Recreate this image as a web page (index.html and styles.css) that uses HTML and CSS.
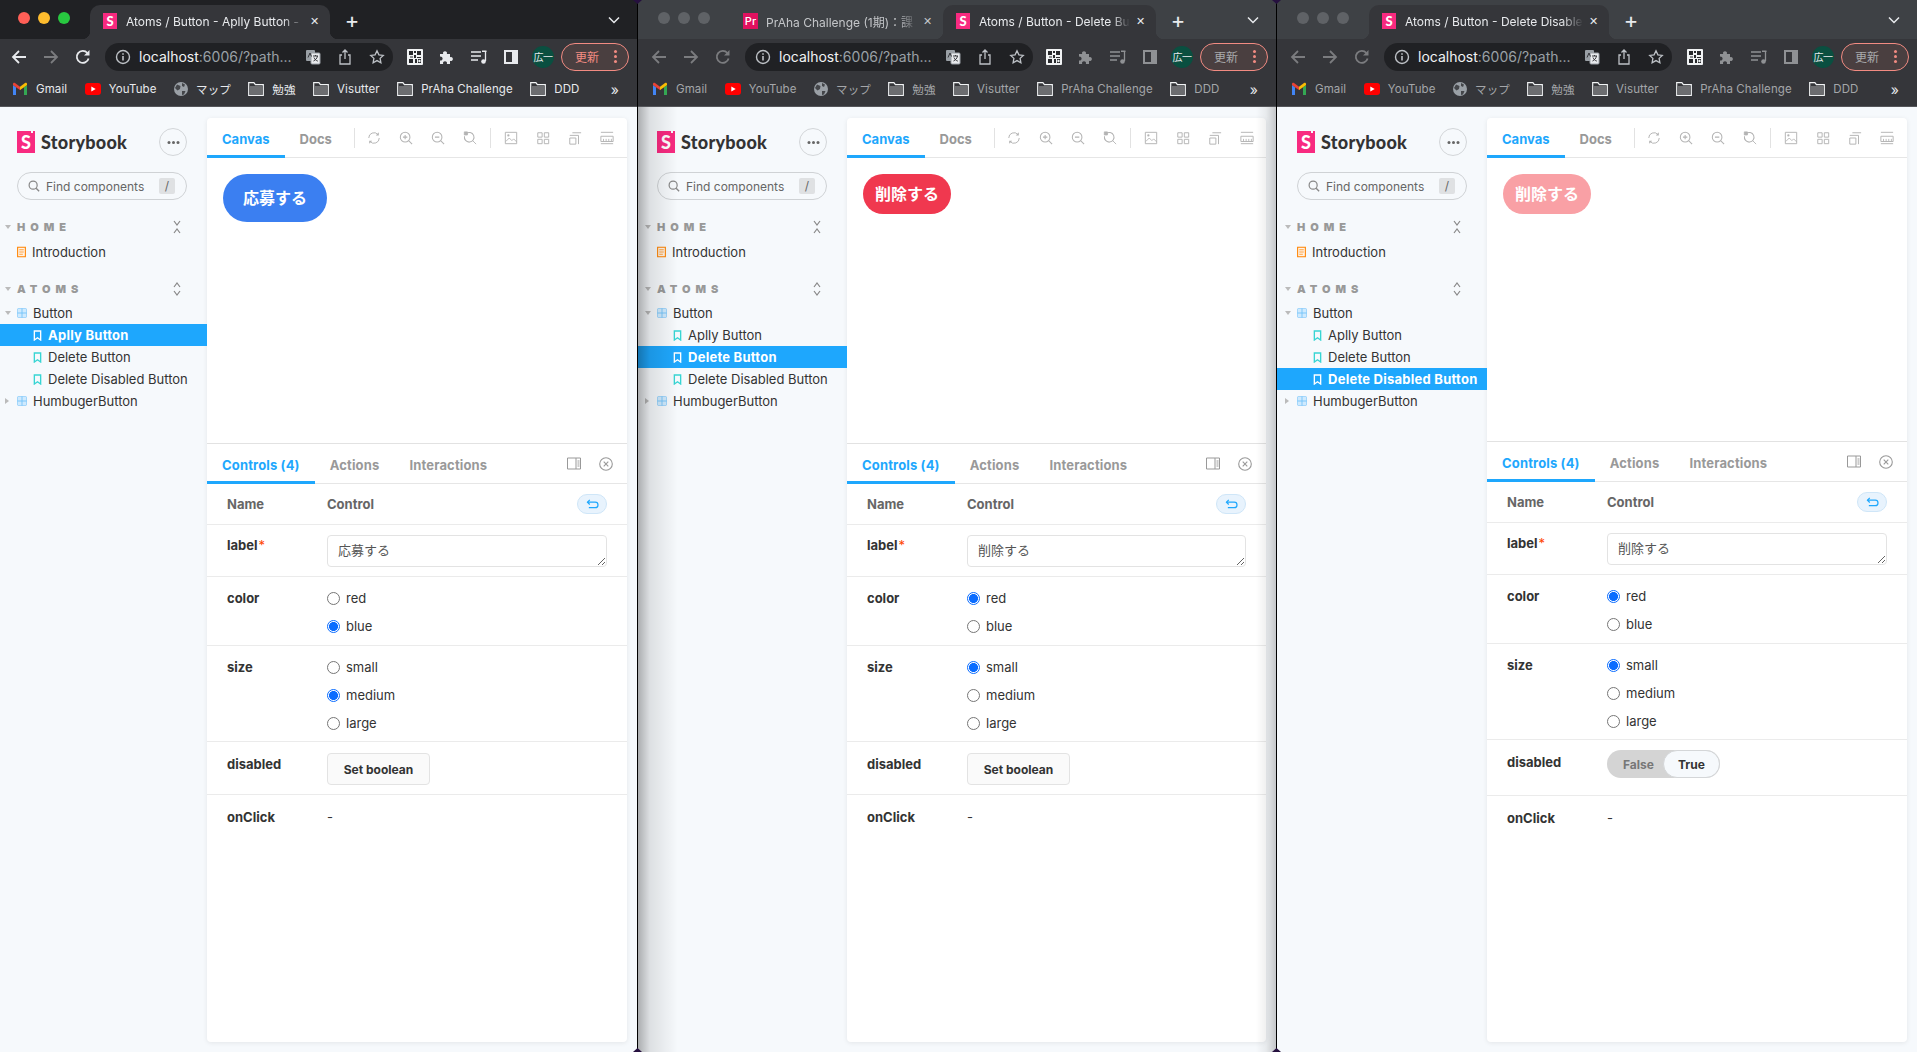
FILE: index.html
```html
<!DOCTYPE html>
<html lang="ja">
<head>
<meta charset="utf-8">
<title>Storybook – Atoms / Button</title>
<link rel="stylesheet" href="styles.css">
</head>
<body>

<!-- icon sprite -->
<svg class="sprite" width="0" height="0" aria-hidden="true">
  <symbol id="i-back" viewBox="0 0 16 16"><path d="M15 8H2M8 2 2 8l6 6" fill="none" stroke="currentColor" stroke-width="1.8"/></symbol>
  <symbol id="i-fwd" viewBox="0 0 16 16"><path d="M1 8h13M8 2l6 6-6 6" fill="none" stroke="currentColor" stroke-width="1.8"/></symbol>
  <symbol id="i-reload" viewBox="0 0 16 16"><path d="M13.6 9.5A6 6 0 1 1 12.4 4" fill="none" stroke="currentColor" stroke-width="1.8"/><path d="M14.5 1v5.5H9z" fill="currentColor"/></symbol>
  <symbol id="i-info" viewBox="0 0 16 16"><circle cx="8" cy="8" r="6.5" fill="none" stroke="currentColor" stroke-width="1.4"/><path d="M7.2 7h1.6v4.6H7.2zM7.2 4.2h1.6v1.6H7.2z" fill="currentColor"/></symbol>
  <symbol id="i-translate" viewBox="0 0 16 16"><rect x="1" y="1" width="9" height="11" rx="1" fill="#9aa0a6"/><rect x="6" y="4" width="9" height="11" rx="1" fill="#e8eaed" stroke="#9aa0a6"/><path d="M8 7h5M10.5 6v1M12.5 7c-.5 2.5-2 4-4 5M9 8.5c.8 2 2 3 3.8 3.6" fill="none" stroke="#35363a"/><path d="M3 8.5 5 4l1.5 3.5" fill="none" stroke="#35363a"/></symbol>
  <symbol id="i-share" viewBox="0 0 16 16"><path d="M5 6H3v9h10V6h-2M8 10V1M5.5 3.5 8 1l2.5 2.5" fill="none" stroke="currentColor" stroke-width="1.3"/></symbol>
  <symbol id="i-star" viewBox="0 0 16 16"><path d="m8 1.8 1.9 4 4.4.6-3.2 3 .8 4.4L8 11.6l-3.9 2.2.8-4.4-3.2-3 4.4-.6z" fill="none" stroke="currentColor" stroke-width="1.3"/></symbol>
  <symbol id="i-qr" viewBox="0 0 16 16"><rect width="16" height="16" rx="1" fill="#f1f3f4"/><path d="M2 2h4v4H2zM10 2h4v4h-4zM2 10h4v4H2zM7 2h2v2H7zM7 6h2v3H7zM3 7.500h3v1H3zM10 8h4v1h-4zM8 10h2v4H8zM11 10h3v4h-3z" fill="#28292c"/><circle cx="12.500" cy="12" r="1.200" fill="#f1f3f4"/></symbol>
  <symbol id="i-puzzle" viewBox="0 0 16 16"><path d="M1 5h3.200a2 2 0 1 1 3.600 0H11v3.200a2 2 0 1 1 0 3.600V15H7.800a2 2 0 1 0-3.600 0H1v-3.500a2 2 0 1 0 0-3.800z" fill="currentColor"/></symbol>
  <symbol id="i-queue" viewBox="0 0 16 16"><path d="M0 3h10M0 7h10M0 11h7M14.500 2v10" fill="none" stroke="currentColor" stroke-width="1.300"/><path d="M11 1.500h4.500V3H11z" fill="currentColor"/><circle cx="12.500" cy="12.500" r="2.300" fill="currentColor"/></symbol>
  <symbol id="i-side" viewBox="0 0 16 16"><path d="M1 1h14v14H1z" fill="currentColor"/><path d="M3 3h6v10H3z" fill="#35363a"/></symbol>
  <symbol id="i-gmail" viewBox="0 0 16 14"><path d="M1 13V3l3 2.300V13z" fill="#4285f4"/><path d="M15 13V3l-3 2.300V13z" fill="#34a853"/><path d="M4 5.300 1 3V1.800C1 .8 2.200.3 3 .9l5 3.800 1.500 2L8 8z" fill="#ea4335"/><path d="M12 5.300 8 8V4.700L13 .9c.8-.6 2-.1 2 .9V3z" fill="#fbbc04"/></symbol>
  <symbol id="i-yt" viewBox="0 0 16 12"><rect width="16" height="12" rx="3" fill="#f00"/><path d="m6.300 3.500 4.400 2.500-4.400 2.500z" fill="#fff"/></symbol>
  <symbol id="i-globe" viewBox="0 0 14 14"><circle cx="7" cy="7" r="7" fill="#9aa0a6"/><path d="M3 2.500 6.500 4 6 7 3.500 8.500 1 6zM8 1l3 1.500-1 2.500L8 4zM8 9h3.500L10 12.500l-2 .5z" fill="#44464a"/></symbol>
  <symbol id="i-folder" viewBox="0 0 16 14"><path d="M.700.7h5.200l1.500 2h7.900v10.600H.700z" fill="none" stroke="#f1f3f4" stroke-width="1.200"/><path d="M1.300 4h13.400v8.700H1.300z" fill="#6c6d70"/></symbol>
  <symbol id="i-search" viewBox="0 0 14 14"><circle cx="6" cy="6" r="4.700" fill="none" stroke="currentColor" stroke-width="1.400"/><path d="m9.500 9.500 3.500 3.500" stroke="currentColor" stroke-width="1.600"/></symbol>
  <symbol id="i-collapse" viewBox="0 0 10 14"><path d="m2 1 3 4 3-4M2 13l3-4 3 4" fill="none" stroke="currentColor" stroke-width="1.200"/></symbol>
  <symbol id="i-expand" viewBox="0 0 10 14"><path d="m2 5 3-4 3 4M2 9l3 4 3-4" fill="none" stroke="currentColor" stroke-width="1.200"/></symbol>
  <symbol id="i-doc" viewBox="0 0 10 12"><path d="M.7.7h8.600v10.600H.7z" fill="#fff3e6" stroke="currentColor" stroke-width="1.200"/><path d="M2.500 3.500h5M2.500 6h5M2.500 8.500h4" stroke="currentColor" stroke-width=".8"/></symbol>
  <symbol id="i-comp" viewBox="0 0 12 12"><rect x=".5" y=".5" width="11" height="11" rx="1.500" fill="#cfeafe" stroke="currentColor" stroke-opacity=".7"/><path d="M6 .5v11M.5 6h11" stroke="currentColor"/></symbol>
  <symbol id="i-mark" viewBox="0 0 10 12"><path d="M1.500 1h7v10L5 8.500 1.500 11z" fill="none" stroke="currentColor" stroke-width="1.500"/></symbol>
  <symbol id="i-sync" viewBox="0 0 16 16"><path d="M2 8a6 6 0 0 1 10.500-4M14 8a6 6 0 0 1-10.500 4" fill="none" stroke="currentColor" stroke-width="1.100"/><path d="M13.500 1.500v3.500H10zM2.500 14.500V11H6z" fill="currentColor"/></symbol>
  <symbol id="i-zoomin" viewBox="0 0 16 16"><circle cx="7" cy="7" r="5.500" fill="none" stroke="currentColor" stroke-width="1.200"/><path d="M7 4.500v5M4.500 7h5M11 11l4 4" stroke="currentColor" stroke-width="1.200"/></symbol>
  <symbol id="i-zoomout" viewBox="0 0 16 16"><circle cx="7" cy="7" r="5.500" fill="none" stroke="currentColor" stroke-width="1.200"/><path d="M4.500 7h5M11 11l4 4" stroke="currentColor" stroke-width="1.200"/></symbol>
  <symbol id="i-zoomreset" viewBox="0 0 16 16"><path d="M3.500 3A5.500 5.500 0 1 1 1.700 6" fill="none" stroke="currentColor" stroke-width="1.200"/><path d="M1.500 1h3.500v3.500H1.500zM11 11l4 4" fill="currentColor" stroke="currentColor" stroke-width="1"/></symbol>
  <symbol id="i-photo" viewBox="0 0 16 16"><path d="M1.500 1.500h13v13h-13z" fill="none" stroke="currentColor" stroke-width="1.100"/><path d="m2 12 4-4 3 3 2-2 3.500 3.500" fill="none" stroke="currentColor"/><circle cx="5" cy="5" r="1.300" fill="currentColor"/></symbol>
  <symbol id="i-grid" viewBox="0 0 16 16"><path d="M2 2h5v5H2zM9.500 2h5v5h-5zM2 9.500h5v5H2zM9.500 9.500h5v5h-5z" fill="none" stroke="currentColor" stroke-width="1.100"/></symbol>
  <symbol id="i-outline" viewBox="0 0 16 16"><path d="M2 5h10v10M5 2h10M2 8h7v7H2z" fill="none" stroke="currentColor" stroke-width="1.100"/></symbol>
  <symbol id="i-ruler" viewBox="0 0 16 16"><path d="M1 1.500h14M1 14.500h14" stroke="currentColor" stroke-width="1.100"/><path d="M1 6h14v6H1z" fill="none" stroke="currentColor" stroke-width="1.100"/><path d="M4 9v3M7 9v3M10 9v3M13 9v3" stroke="currentColor"/></symbol>
  <symbol id="i-panel" viewBox="0 0 14 12"><path d="M.5.5h13v11H.5z" fill="none" stroke="currentColor"/><path d="M9 .5v11" stroke="currentColor"/><path d="M10.500 2.500h2v7h-2z" fill="currentColor" opacity=".5"/></symbol>
  <symbol id="i-close" viewBox="0 0 14 14"><circle cx="7" cy="7" r="6.300" fill="none" stroke="currentColor" stroke-width="1.100"/><path d="m4.700 4.700 4.600 4.600m0-4.600-4.600 4.600" stroke="currentColor" stroke-width="1.100"/></symbol>
  <symbol id="i-undo" viewBox="0 0 14 12"><path d="M1.500 3.500h8.500a3 3 0 0 1 0 6H3" fill="none" stroke="currentColor" stroke-width="1.300"/><path d="M4 1 1.500 3.500 4 6" fill="none" stroke="currentColor" stroke-width="1.300"/></symbol>
</svg>

<!-- 1) APPLY BUTTON ---------------------------------------------------------->
<div class="window window-front">
  <div class="tabstrip">
    <div class="lights"><i class="light red"></i><i class="light yellow"></i><i class="light green"></i></div>
    <div class="tab tab-active tab-wide"><span class="favicon">S</span><span class="tab-title">Atoms / Button - Aplly Button -</span><span class="tab-x">✕</span></div>
    <span class="newtab">+</span>
    <svg class="strip-more" viewBox="0 0 12 8"><path d="m1 1.500 5 5 5-5" fill="none" stroke="currentColor" stroke-width="1.500"/></svg>
  </div>
  <div class="toolbar">
    <svg class="ti ti-nav"><use href="#i-back"/></svg>
    <svg class="ti ti-nav ti-off"><use href="#i-fwd"/></svg>
    <svg class="ti ti-nav"><use href="#i-reload"/></svg>
    <div class="urlbar">
      <svg class="ti ti-dim"><use href="#i-info"/></svg>
      <span class="url"><b>localhost</b>:6006/?path...</span>
      <svg class="ti url-right"><use href="#i-translate"/></svg>
      <svg class="ti ti-dim"><use href="#i-share"/></svg>
      <svg class="ti ti-dim"><use href="#i-star"/></svg>
    </div>
    <div class="actions">
      <svg class="ti"><use href="#i-qr"/></svg>
      <svg class="ti ti-fade"><use href="#i-puzzle"/></svg>
      <svg class="ti ti-fade"><use href="#i-queue"/></svg>
      <svg class="ti ti-fade"><use href="#i-side"/></svg>
      <span class="avatar">広一</span>
      <span class="update"><span class="update-text">更新</span><i class="dots"></i></span>
    </div>
  </div>
  <div class="bookmarks">
    <span class="mark"><svg class="bi"><use href="#i-gmail"/></svg>Gmail</span>
    <span class="mark"><svg class="bi"><use href="#i-yt"/></svg>YouTube</span>
    <span class="mark"><svg class="bi bi-globe"><use href="#i-globe"/></svg>マップ</span>
    <span class="mark"><svg class="bi"><use href="#i-folder"/></svg>勉強</span>
    <span class="mark"><svg class="bi"><use href="#i-folder"/></svg>Visutter</span>
    <span class="mark"><svg class="bi"><use href="#i-folder"/></svg>PrAha Challenge</span>
    <span class="mark"><svg class="bi"><use href="#i-folder"/></svg>DDD</span>
    <span class="mark-more">»</span>
  </div>
  <div class="app">
    <aside class="sidebar">
      <div class="brand"><span class="logo">S</span><span class="brand-name">Storybook</span><span class="brand-menu"><i></i></span></div>
      <div class="search"><svg class="search-icon"><use href="#i-search"/></svg><span class="search-text">Find components</span><kbd class="search-key">/</kbd></div>
      <div class="group"><span class="caret caret-down"></span><span class="group-name">HOME</span><svg class="group-toggle"><use href="#i-collapse"/></svg></div>
      <div class="item"><svg class="ico ico-doc"><use href="#i-doc"/></svg>Introduction</div>
      <div class="group group-next"><span class="caret caret-down"></span><span class="group-name">ATOMS</span><svg class="group-toggle"><use href="#i-expand"/></svg></div>
      <div class="item"><span class="caret caret-down caret-item"></span><svg class="ico ico-comp"><use href="#i-comp"/></svg>Button</div>
      <div class="item item-sub item-on"><svg class="ico ico-mark"><use href="#i-mark"/></svg>Aplly Button</div>
      <div class="item item-sub"><svg class="ico ico-mark"><use href="#i-mark"/></svg>Delete Button</div>
      <div class="item item-sub"><svg class="ico ico-mark"><use href="#i-mark"/></svg>Delete Disabled Button</div>
      <div class="item"><span class="caret caret-right caret-item"></span><svg class="ico ico-comp"><use href="#i-comp"/></svg>HumbugerButton</div>
    </aside>
    <main class="main">
      <div class="panel">
        <section class="canvas">
          <div class="tabs">
            <span class="tabs-item tabs-on">Canvas</span><span class="tabs-item">Docs</span>
            <i class="tool-sep"></i>
            <svg class="tool tool-first"><use href="#i-sync"/></svg><svg class="tool"><use href="#i-zoomin"/></svg><svg class="tool"><use href="#i-zoomout"/></svg><svg class="tool"><use href="#i-zoomreset"/></svg>
            <i class="tool-sep tool-sep2"></i>
            <svg class="tool tool-first2"><use href="#i-photo"/></svg><svg class="tool"><use href="#i-grid"/></svg><svg class="tool"><use href="#i-outline"/></svg><svg class="tool"><use href="#i-ruler"/></svg>
          </div>
          <div class="stage"><button class="demo demo-blue">応募する</button></div>
        </section>
        <section class="addons">
          <div class="tabs">
            <span class="tabs-item tabs-on">Controls (4)</span><span class="tabs-item">Actions</span><span class="tabs-item">Interactions</span>
            <svg class="addon-icon addon-icon-first"><use href="#i-panel"/></svg><svg class="addon-icon"><use href="#i-close"/></svg>
          </div>
          <div class="row row-head"><span class="name">Name</span><span class="ctl">Control</span><span class="reset"><svg><use href="#i-undo"/></svg></span></div>
          <div class="row row-label"><span class="name">label<em>*</em></span><div class="ctl"><textarea class="field">応募する</textarea></div></div>
          <div class="row row-radio row-color"><span class="name">color</span><div class="ctl">
            <label class="radio"><input type="radio" name="color1">red</label>
            <label class="radio"><input type="radio" name="color1" checked>blue</label></div></div>
          <div class="row row-radio"><span class="name">size</span><div class="ctl">
            <label class="radio"><input type="radio" name="size1">small</label>
            <label class="radio"><input type="radio" name="size1" checked>medium</label>
            <label class="radio"><input type="radio" name="size1">large</label></div></div>
          <div class="row row-bool"><span class="name">disabled</span><div class="ctl"><button class="setbool">Set boolean</button></div></div>
          <div class="row row-last"><span class="name">onClick</span><span class="ctl ctl-text">-</span></div>
        </section>
      </div>
    </main>
  </div>
</div>

<!-- 2) DELETE BUTTON ---------------------------------------------------------->
<div class="window window-back window-mid">
  <div class="tabstrip">
    <div class="lights"><i class="light"></i><i class="light"></i><i class="light"></i></div>
    <div class="tab tab-idle"><span class="favicon favicon-pr">Pr</span><span class="tab-title">PrAha Challenge (1期)：課</span><span class="tab-x">✕</span></div>
    <div class="tab tab-active"><span class="favicon">S</span><span class="tab-title">Atoms / Button - Delete Bu</span><span class="tab-x">✕</span></div>
    <span class="newtab">+</span>
    <svg class="strip-more" viewBox="0 0 12 8"><path d="m1 1.500 5 5 5-5" fill="none" stroke="currentColor" stroke-width="1.500"/></svg>
  </div>
  <div class="toolbar">
    <svg class="ti ti-nav ti-off"><use href="#i-back"/></svg>
    <svg class="ti ti-nav ti-off"><use href="#i-fwd"/></svg>
    <svg class="ti ti-nav ti-off"><use href="#i-reload"/></svg>
    <div class="urlbar">
      <svg class="ti ti-dim"><use href="#i-info"/></svg>
      <span class="url"><b>localhost</b>:6006/?path...</span>
      <svg class="ti url-right"><use href="#i-translate"/></svg>
      <svg class="ti ti-dim"><use href="#i-share"/></svg>
      <svg class="ti ti-dim"><use href="#i-star"/></svg>
    </div>
    <div class="actions">
      <svg class="ti"><use href="#i-qr"/></svg>
      <svg class="ti ti-fade"><use href="#i-puzzle"/></svg>
      <svg class="ti ti-fade"><use href="#i-queue"/></svg>
      <svg class="ti ti-fade"><use href="#i-side"/></svg>
      <span class="avatar">広一</span>
      <span class="update"><span class="update-text">更新</span><i class="dots"></i></span>
    </div>
  </div>
  <div class="bookmarks">
    <span class="mark"><svg class="bi"><use href="#i-gmail"/></svg>Gmail</span>
    <span class="mark"><svg class="bi"><use href="#i-yt"/></svg>YouTube</span>
    <span class="mark"><svg class="bi bi-globe"><use href="#i-globe"/></svg>マップ</span>
    <span class="mark"><svg class="bi"><use href="#i-folder"/></svg>勉強</span>
    <span class="mark"><svg class="bi"><use href="#i-folder"/></svg>Visutter</span>
    <span class="mark"><svg class="bi"><use href="#i-folder"/></svg>PrAha Challenge</span>
    <span class="mark"><svg class="bi"><use href="#i-folder"/></svg>DDD</span>
    <span class="mark-more">»</span>
  </div>
  <div class="app">
    <aside class="sidebar">
      <div class="brand"><span class="logo">S</span><span class="brand-name">Storybook</span><span class="brand-menu"><i></i></span></div>
      <div class="search"><svg class="search-icon"><use href="#i-search"/></svg><span class="search-text">Find components</span><kbd class="search-key">/</kbd></div>
      <div class="group"><span class="caret caret-down"></span><span class="group-name">HOME</span><svg class="group-toggle"><use href="#i-collapse"/></svg></div>
      <div class="item"><svg class="ico ico-doc"><use href="#i-doc"/></svg>Introduction</div>
      <div class="group group-next"><span class="caret caret-down"></span><span class="group-name">ATOMS</span><svg class="group-toggle"><use href="#i-expand"/></svg></div>
      <div class="item"><span class="caret caret-down caret-item"></span><svg class="ico ico-comp"><use href="#i-comp"/></svg>Button</div>
      <div class="item item-sub"><svg class="ico ico-mark"><use href="#i-mark"/></svg>Aplly Button</div>
      <div class="item item-sub item-on"><svg class="ico ico-mark"><use href="#i-mark"/></svg>Delete Button</div>
      <div class="item item-sub"><svg class="ico ico-mark"><use href="#i-mark"/></svg>Delete Disabled Button</div>
      <div class="item"><span class="caret caret-right caret-item"></span><svg class="ico ico-comp"><use href="#i-comp"/></svg>HumbugerButton</div>
    </aside>
    <main class="main">
      <div class="panel">
        <section class="canvas">
          <div class="tabs">
            <span class="tabs-item tabs-on">Canvas</span><span class="tabs-item">Docs</span>
            <i class="tool-sep"></i>
            <svg class="tool tool-first"><use href="#i-sync"/></svg><svg class="tool"><use href="#i-zoomin"/></svg><svg class="tool"><use href="#i-zoomout"/></svg><svg class="tool"><use href="#i-zoomreset"/></svg>
            <i class="tool-sep tool-sep2"></i>
            <svg class="tool tool-first2"><use href="#i-photo"/></svg><svg class="tool"><use href="#i-grid"/></svg><svg class="tool"><use href="#i-outline"/></svg><svg class="tool"><use href="#i-ruler"/></svg>
          </div>
          <div class="stage"><button class="demo demo-red">削除する</button></div>
        </section>
        <section class="addons">
          <div class="tabs">
            <span class="tabs-item tabs-on">Controls (4)</span><span class="tabs-item">Actions</span><span class="tabs-item">Interactions</span>
            <svg class="addon-icon addon-icon-first"><use href="#i-panel"/></svg><svg class="addon-icon"><use href="#i-close"/></svg>
          </div>
          <div class="row row-head"><span class="name">Name</span><span class="ctl">Control</span><span class="reset"><svg><use href="#i-undo"/></svg></span></div>
          <div class="row row-label"><span class="name">label<em>*</em></span><div class="ctl"><textarea class="field">削除する</textarea></div></div>
          <div class="row row-radio row-color"><span class="name">color</span><div class="ctl">
            <label class="radio"><input type="radio" name="color2" checked>red</label>
            <label class="radio"><input type="radio" name="color2">blue</label></div></div>
          <div class="row row-radio"><span class="name">size</span><div class="ctl">
            <label class="radio"><input type="radio" name="size2" checked>small</label>
            <label class="radio"><input type="radio" name="size2">medium</label>
            <label class="radio"><input type="radio" name="size2">large</label></div></div>
          <div class="row row-bool"><span class="name">disabled</span><div class="ctl"><button class="setbool">Set boolean</button></div></div>
          <div class="row row-last"><span class="name">onClick</span><span class="ctl ctl-text">-</span></div>
        </section>
      </div>
    </main>
  </div>
</div>

<!-- 3) DELETE DISABLED BUTTON ------------------------------------------------->
<div class="window window-back window-last">
  <div class="tabstrip">
    <div class="lights"><i class="light"></i><i class="light"></i><i class="light"></i></div>
    <div class="tab tab-active tab-wide"><span class="favicon">S</span><span class="tab-title">Atoms / Button - Delete Disable</span><span class="tab-x">✕</span></div>
    <span class="newtab">+</span>
    <svg class="strip-more" viewBox="0 0 12 8"><path d="m1 1.500 5 5 5-5" fill="none" stroke="currentColor" stroke-width="1.500"/></svg>
  </div>
  <div class="toolbar">
    <svg class="ti ti-nav ti-off"><use href="#i-back"/></svg>
    <svg class="ti ti-nav ti-off"><use href="#i-fwd"/></svg>
    <svg class="ti ti-nav ti-off"><use href="#i-reload"/></svg>
    <div class="urlbar">
      <svg class="ti ti-dim"><use href="#i-info"/></svg>
      <span class="url"><b>localhost</b>:6006/?path...</span>
      <svg class="ti url-right"><use href="#i-translate"/></svg>
      <svg class="ti ti-dim"><use href="#i-share"/></svg>
      <svg class="ti ti-dim"><use href="#i-star"/></svg>
    </div>
    <div class="actions">
      <svg class="ti"><use href="#i-qr"/></svg>
      <svg class="ti ti-fade"><use href="#i-puzzle"/></svg>
      <svg class="ti ti-fade"><use href="#i-queue"/></svg>
      <svg class="ti ti-fade"><use href="#i-side"/></svg>
      <span class="avatar">広一</span>
      <span class="update"><span class="update-text">更新</span><i class="dots"></i></span>
    </div>
  </div>
  <div class="bookmarks">
    <span class="mark"><svg class="bi"><use href="#i-gmail"/></svg>Gmail</span>
    <span class="mark"><svg class="bi"><use href="#i-yt"/></svg>YouTube</span>
    <span class="mark"><svg class="bi bi-globe"><use href="#i-globe"/></svg>マップ</span>
    <span class="mark"><svg class="bi"><use href="#i-folder"/></svg>勉強</span>
    <span class="mark"><svg class="bi"><use href="#i-folder"/></svg>Visutter</span>
    <span class="mark"><svg class="bi"><use href="#i-folder"/></svg>PrAha Challenge</span>
    <span class="mark"><svg class="bi"><use href="#i-folder"/></svg>DDD</span>
    <span class="mark-more">»</span>
  </div>
  <div class="app">
    <aside class="sidebar">
      <div class="brand"><span class="logo">S</span><span class="brand-name">Storybook</span><span class="brand-menu"><i></i></span></div>
      <div class="search"><svg class="search-icon"><use href="#i-search"/></svg><span class="search-text">Find components</span><kbd class="search-key">/</kbd></div>
      <div class="group"><span class="caret caret-down"></span><span class="group-name">HOME</span><svg class="group-toggle"><use href="#i-collapse"/></svg></div>
      <div class="item"><svg class="ico ico-doc"><use href="#i-doc"/></svg>Introduction</div>
      <div class="group group-next"><span class="caret caret-down"></span><span class="group-name">ATOMS</span><svg class="group-toggle"><use href="#i-expand"/></svg></div>
      <div class="item"><span class="caret caret-down caret-item"></span><svg class="ico ico-comp"><use href="#i-comp"/></svg>Button</div>
      <div class="item item-sub"><svg class="ico ico-mark"><use href="#i-mark"/></svg>Aplly Button</div>
      <div class="item item-sub"><svg class="ico ico-mark"><use href="#i-mark"/></svg>Delete Button</div>
      <div class="item item-sub item-on"><svg class="ico ico-mark"><use href="#i-mark"/></svg>Delete Disabled Button</div>
      <div class="item"><span class="caret caret-right caret-item"></span><svg class="ico ico-comp"><use href="#i-comp"/></svg>HumbugerButton</div>
    </aside>
    <main class="main">
      <div class="panel">
        <section class="canvas">
          <div class="tabs">
            <span class="tabs-item tabs-on">Canvas</span><span class="tabs-item">Docs</span>
            <i class="tool-sep"></i>
            <svg class="tool tool-first"><use href="#i-sync"/></svg><svg class="tool"><use href="#i-zoomin"/></svg><svg class="tool"><use href="#i-zoomout"/></svg><svg class="tool"><use href="#i-zoomreset"/></svg>
            <i class="tool-sep tool-sep2"></i>
            <svg class="tool tool-first2"><use href="#i-photo"/></svg><svg class="tool"><use href="#i-grid"/></svg><svg class="tool"><use href="#i-outline"/></svg><svg class="tool"><use href="#i-ruler"/></svg>
          </div>
          <div class="stage"><button class="demo demo-red demo-off">削除する</button></div>
        </section>
        <section class="addons">
          <div class="tabs">
            <span class="tabs-item tabs-on">Controls (4)</span><span class="tabs-item">Actions</span><span class="tabs-item">Interactions</span>
            <svg class="addon-icon addon-icon-first"><use href="#i-panel"/></svg><svg class="addon-icon"><use href="#i-close"/></svg>
          </div>
          <div class="row row-head"><span class="name">Name</span><span class="ctl">Control</span><span class="reset"><svg><use href="#i-undo"/></svg></span></div>
          <div class="row row-label"><span class="name">label<em>*</em></span><div class="ctl"><textarea class="field">削除する</textarea></div></div>
          <div class="row row-radio row-color"><span class="name">color</span><div class="ctl">
            <label class="radio"><input type="radio" name="color3" checked>red</label>
            <label class="radio"><input type="radio" name="color3">blue</label></div></div>
          <div class="row row-radio"><span class="name">size</span><div class="ctl">
            <label class="radio"><input type="radio" name="size3" checked>small</label>
            <label class="radio"><input type="radio" name="size3">medium</label>
            <label class="radio"><input type="radio" name="size3">large</label></div></div>
          <div class="row row-bool row-toggle"><span class="name">disabled</span><div class="ctl"><span class="toggle"><span class="toggle-off">False</span><span class="toggle-on">True</span></span></div></div>
          <div class="row row-last"><span class="name">onClick</span><span class="ctl ctl-text">-</span></div>
        </section>
      </div>
    </main>
  </div>
</div>

</body>
</html>
```

FILE: styles.css
```css
/* --------- page --------- */
*{box-sizing:border-box;margin:0;padding:0}
html,body{height:100%}
body{
  display:flex;
  overflow:hidden;
  background:#000;
  font-family:Inter,"Noto Sans CJK JP",sans-serif;
  font-size:13px;
  color:#333;
}
.sprite{position:absolute}
svg{display:block}

/* --------- windows --------- */
.window{
  --bar-inset:0px;
  --side-inset:0px;
  --canvas-h:325px;
  --strip:#202124;
  --mark:#e8eaed;
  --fade:#e8eaed;
  position:relative;
  display:flex;
  flex-direction:column;
  height:100%;
}
.window-front{width:638px;border-right:1px solid #000}
.window-back{--bar-inset:2px;--strip:#3e4145;--mark:#a4a6a9;--fade:#8f9194}
.window-mid{--side-inset:2px;width:639px;border-right:1px solid #000}
.window-last{--side-inset:3px;--canvas-h:323px;width:640px}

/* wallpaper showing through the rounded window corners */
.window-front::before,.window-front::after,.window-mid::before,.window-mid::after{
  content:"";
  position:absolute;
  right:-5px;
  width:9px;
  height:4px;
  z-index:3;
  background:#26103f;
}
.window-front::before,.window-mid::before{top:0;clip-path:polygon(0 0,100% 0,50% 100%)}
.window-front::after,.window-mid::after{bottom:0;clip-path:polygon(50% 0,100% 100%,0 100%)}

/* window 2 sits under the shadow of its neighbours */
.window-mid .app::after{
  content:"";
  position:absolute;
  inset:0;
  pointer-events:none;
  background:
    linear-gradient(90deg,rgba(0,0,0,.3),rgba(0,0,0,.1) 12px,rgba(0,0,0,0) 40px),
    linear-gradient(270deg,rgba(0,0,0,.2),rgba(0,0,0,.06) 10px,rgba(0,0,0,0) 20px);
}

/* --------- tab strip --------- */
.tabstrip{
  display:flex;
  align-items:flex-end;
  height:39px;
  flex:none;
  padding-left:calc(18px + var(--bar-inset));
  background:var(--strip);
  color:#e8eaed;
}
.lights{display:flex;gap:8px;align-self:flex-start;margin-top:12px;margin-right:20px}
.light{width:12px;height:12px;border-radius:50%;background:#5f6266}
.red{background:#ff5f57}
.yellow{background:#febc2e}
.green{background:#28c840}
.tab{
  position:relative;
  display:flex;
  align-items:center;
  width:213px;
  height:34px;
  padding:0 9px 2px 13px;
  font-size:12px;
  border-radius:10px 10px 0 0;
}
.tab-wide{width:240px}
.tab-active{background:#35363a}
.tab-active::before,.tab-active::after{
  content:"";
  position:absolute;
  bottom:0;
  width:8px;
  height:8px;
}
.tab-active::before{left:-8px;background:radial-gradient(circle at 0 0,transparent 8px,#35363a 8.5px)}
.tab-active::after{right:-8px;background:radial-gradient(circle at 100% 0,transparent 8px,#35363a 8.5px)}
.tab-idle{color:#c4c6c9}
.favicon{
  flex:none;
  width:14px;
  height:16px;
  margin-right:9px;
  background:#f82a80;
  color:#fff;
  font:900 13px/16px Lato,sans-serif;
  text-align:center;
}
.favicon-pr{background:#e0115f;font:500 11px/16px Inter,sans-serif;width:15px;margin-right:8px}
.tab-title{
  flex:1;
  min-width:0;
  overflow:hidden;
  white-space:nowrap;
  -webkit-mask-image:linear-gradient(90deg,#000 88%,transparent);
  mask-image:linear-gradient(90deg,#000 88%,transparent);
}
.tab-x{flex:none;width:14px;margin-left:3px;font-size:11px;text-align:center}
.newtab{align-self:center;margin-left:14px;width:16px;font-size:22px;line-height:22px;text-align:center;font-weight:400}
.strip-more{align-self:center;width:12px;height:8px;margin-left:auto;margin-right:17px}

/* --------- toolbar --------- */
.toolbar{
  display:flex;
  align-items:center;
  flex:none;
  height:37px;
  padding:0 8px 2px calc(9px + var(--bar-inset));
  background:#35363a;
  color:#e8eaed;
}
.ti{flex:none;width:16px;height:16px}
.ti-nav{width:20px;height:16px;margin-right:12px}
.ti-off{color:#7b7c7f}
.ti-dim{color:#bdc1c6}
.urlbar{
  display:flex;
  align-items:center;
  gap:16px;
  flex:none;
  width:288px;
  height:28px;
  padding:0 12px 0 10px;
  border-radius:14px;
  background:#202124;
}
.url{flex:none;width:150px;margin-left:-8px;font-size:14px;color:#9aa0a6;white-space:nowrap}
.url b{font-weight:400;color:#f1f3f4}
.url-right{margin-left:auto}
.actions{display:flex;align-items:center;gap:16px;margin-left:auto}
.ti-fade{color:var(--fade)}
.avatar{
  width:22px;
  height:22px;
  margin-left:-3px;
  margin-right:-9px;
  border-radius:50%;
  background:#0a4f40;
  color:#e8eaed;
  font-size:10px;
  line-height:22px;
  text-align:center;
  white-space:nowrap;
  letter-spacing:-.5px;
}
.update{
  display:flex;
  align-items:center;
  width:68px;
  height:28px;
  padding-left:13px;
  border:1px solid #f28b82;
  border-radius:14px;
  background:#4a3f40;
  color:#f28b82;
  font-size:12px;
}
.window-back .update-text{color:#a8a9ab}
.dots{
  width:3px;
  height:3px;
  margin-left:15px;
  border-radius:50%;
  background:#f28b82;
  box-shadow:0 -5px 0 #f28b82,0 5px 0 #f28b82;
}

/* --------- bookmarks --------- */
.bookmarks{
  display:flex;
  align-items:center;
  gap:17.5px;
  flex:none;
  height:31px;
  padding:0 18px 4px calc(12px + var(--bar-inset));
  background:#35363a;
  border-bottom:1px solid #55565a;
  color:var(--mark);
  font-size:11.5px;
  letter-spacing:.1px;
}
.mark{display:flex;align-items:center;gap:8px;white-space:nowrap}
.bi{width:16px;height:14px}
.bi-globe{width:14px}
.mark-more{margin-left:auto;font-size:14px;color:#e8eaed}

/* --------- storybook layout --------- */
.app{position:relative;flex:1;display:flex;min-height:0;background:#f6f9fc}
.sidebar{flex:none;width:calc(207px + var(--side-inset));padding-top:21px}
.main{flex:1;min-width:0;padding:11px 10px 10px 0}
.panel{
  display:flex;
  flex-direction:column;
  height:100%;
  border-radius:4px;
  background:#fff;
  box-shadow:0 1px 5px rgba(0,0,0,.08);
  overflow:hidden;
}

/* --------- sidebar --------- */
.brand{
  display:flex;
  align-items:center;
  height:28px;
  padding-left:calc(17px + var(--side-inset));
}
.logo{
  position:relative;
  width:18px;
  height:22px;
  background:#f82a80;
  color:#fff;
  font:900 18px/22px Lato,sans-serif;
  text-align:center;
}
.logo::after{content:"";position:absolute;top:0;right:2px;width:2px;height:2px;background:#f6f9fc}
.brand-name{margin-left:6px;font:900 18px/28px Lato,sans-serif;color:#333;letter-spacing:.25px}
.brand-menu{
  display:flex;
  align-items:center;
  justify-content:center;
  width:28px;
  height:28px;
  margin-left:32px;
  border:1px solid #d3d6d9;
  border-radius:50%;
}
.brand-menu i{
  width:3px;
  height:3px;
  border-radius:50%;
  background:#666;
  box-shadow:-4.5px 0 0 #666,4.5px 0 0 #666;
}
.search{
  display:flex;
  align-items:center;
  width:170px;
  height:28px;
  margin:16px 0 16px calc(17px + var(--side-inset));
  padding:0 11px 0 10px;
  border:1px solid #cfd2d5;
  border-radius:14px;
  color:#666;
}
.search-icon{width:12px;height:12px;color:#888}
.search-text{margin-left:6px;white-space:nowrap;font-size:12px}
.search-key{
  width:16px;
  height:16px;
  margin-left:auto;
  background:#dfe1e3;
  border-radius:2px;
  font:12px/16px Inter,sans-serif;
  color:#666;
  text-align:center;
}
.group{
  position:relative;
  display:flex;
  align-items:center;
  height:22px;
  margin-bottom:3px;
  padding-left:calc(17px + var(--side-inset));
}
.group-next{margin-top:15px;margin-bottom:2px}
.group-name{font-size:11px;font-weight:900;letter-spacing:5px;color:#999}
.group-toggle{position:absolute;left:calc(172px + var(--side-inset));top:4px;width:10px;height:14px;color:#888}
.caret{position:absolute;width:0;height:0}
.group .caret{left:calc(5px + var(--side-inset))}
.caret-down{border:3px solid transparent;border-top:4px solid #bbb;border-bottom:0}
.caret-right{border:3px solid transparent;border-left:4px solid #bbb;border-right:0}
.item{
  position:relative;
  display:flex;
  align-items:center;
  height:22px;
  padding-left:calc(17px + var(--side-inset));
  color:#333;
  white-space:nowrap;
}
.caret-item{left:calc(5px + var(--side-inset))}
.item-sub{padding-left:calc(33px + var(--side-inset))}
.item-on{background:#1ea7fd;color:#fff;font-weight:700;letter-spacing:.25px}
.ico{flex:none;width:10px;height:12px;margin-right:6px}
.ico-comp{width:10px;height:10px;color:#6cc0fa}
.ico-doc{width:9px;color:#ff8300}
.ico-mark{width:9px;height:11px;margin-right:6px;color:#37d5d3}
.item-on .ico-mark{color:#fff}

/* --------- tabs (canvas and addons) --------- */
.canvas{flex:none;height:var(--canvas-h)}
.tabs{
  display:flex;
  align-items:center;
  height:40px;
  border-bottom:1px solid #e6e6e6;
}
.tabs-item{
  display:flex;
  align-items:center;
  height:40px;
  margin-bottom:-1px;
  padding:4px 15px 0;
  border-bottom:3px solid transparent;
  font-weight:700;
  color:#999;
  white-space:nowrap;
}
.tabs-on{color:#1ea7fd;border-bottom-color:#1ea7fd}
.addons .tabs-item{letter-spacing:.15px}
.tool-sep{width:1px;height:20px;margin-left:7px;background:#e2e2e2}
.tool{flex:none;width:14px;height:14px;margin-left:18px;color:#b4b4b4}
.tool-first{margin-left:12px}
.tool-sep2{margin-left:13px}
.tool-first2{margin-left:13px}
.stage{padding:16px}
.demo{
  display:block;
  height:40px;
  padding:0 12px 2px;
  border:0;
  border-radius:20px;
  color:#fff;
  font:700 16px Inter,"Noto Sans CJK JP",sans-serif;
}
.demo-blue{height:48px;padding:0 20px 2px;border-radius:24px;background:#3b7ff1}
.demo-red{background:#f0384f}
.demo-off{background:#f9a0a5}

/* --------- addons --------- */
.addons{flex:1;border-top:1px solid #e2e2e2}
.addon-icon{flex:none;width:14px;height:13px;margin-left:18px;color:#999}
.addon-icon-first{margin-left:auto}
.addons .tabs .addon-icon:last-child{margin-right:14px;height:14px}
.row{
  position:relative;
  display:flex;
  align-items:flex-start;
  padding-left:20px;
  border-bottom:1px solid #ebebeb;
}
.name{flex:none;width:100px;padding-top:13px;line-height:18px;font-weight:700;color:#333}
.name em{font-style:normal;color:#ff4400;font-weight:400;margin-left:1px}
.ctl{flex:1;min-width:0;margin-right:20px}
.row-head{height:41px}
.row-head .name,.row-head .ctl{padding-top:11px;line-height:18px;font-weight:700;color:#666}
.reset{
  position:absolute;
  right:20px;
  top:10px;
  display:flex;
  align-items:center;
  justify-content:center;
  width:30px;
  height:20px;
  border:1px solid #cfe6f8;
  border-radius:10px;
  background:#e8f3fd;
  color:#1ea7fd;
}
.reset svg{width:13px;height:11px}
.row-label{height:52px;padding-top:10px}
.row-label .name{padding-top:0;margin-top:1px}
.field{
  display:block;
  width:100%;
  height:32px;
  padding:5px 10px;
  border:1px solid #e3e3e3;
  border-radius:4px;
  color:#555;
  font:13px/18px Inter,"Noto Sans CJK JP",sans-serif;
  outline:0;
}
.row-radio{padding-bottom:4px}
.row-color{padding-bottom:5px}
.row-radio .ctl{padding-top:7px}
.row-radio .name{padding-top:12px}
.radio{display:flex;align-items:center;height:28px;color:#333}
.radio input{
  appearance:none;
  -webkit-appearance:none;
  flex:none;
  width:13px;
  height:13px;
  margin-right:6px;
  border:1px solid #767676;
  border-radius:50%;
  background:#fff;
}
.radio input:checked{
  border-color:#0a6cff;
  background:radial-gradient(circle,#0a6cff 0,#0a6cff 4.2px,#fff 4.8px);
}
.row-bool{height:53px}
.row-bool .name{padding-top:13px}
.setbool{
  display:block;
  width:103px;
  height:32px;
  margin-top:11px;
  border:1px solid #e3e3e3;
  border-radius:4px;
  background:#fafafa;
  color:#333;
  font:700 12px Inter,sans-serif;
}
.row-toggle{height:56px}
.toggle{
  display:inline-flex;
  align-items:center;
  height:28px;
  margin-top:10px;
  border-radius:14px;
  background:#d4d4d4;
  font-size:12px;
  font-weight:700;
}
.toggle-off{padding:0 9px 0 16px;color:#777}
.toggle-on{
  display:flex;
  align-items:center;
  height:28px;
  padding:0 14px;
  border:1px solid #d4d6d8;
  border-radius:14px;
  background:#f6f9fc;
  color:#333;
}
.row-last{border-bottom:0}
.ctl-text{padding-top:13px;line-height:18px}
```
